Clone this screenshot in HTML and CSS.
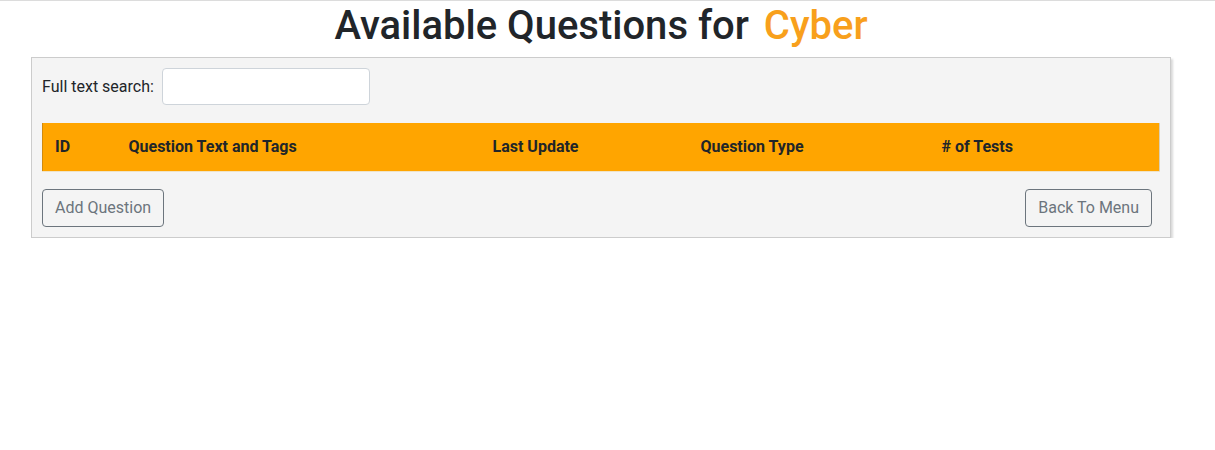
FILE: index.html
```html
<!DOCTYPE html>
<html>
<head>
<meta charset="utf-8">
<link rel="stylesheet" href="styles.css">
</head>
<body>
<div class="topline"></div>
<h1 class="title">Available Questions for <span class="subject">Cyber</span></h1>
<div class="card">
  <div class="search">
    <label>Full text search:</label>
    <input type="text" class="search-input">
  </div>
  <table class="qtable">
    <thead>
      <tr>
        <th class="c-id">ID</th>
        <th class="c-text">Question Text and Tags</th>
        <th class="c-date">Last Update</th>
        <th class="c-type">Question Type</th>
        <th class="c-tests"># of Tests</th>
      </tr>
    </thead>
  </table>
  <div class="actions">
    <button class="btn">Add Question</button>
    <button class="btn">Back To Menu</button>
  </div>
</div>
</body>
</html>
```

FILE: styles.css
```css
html, body {
  margin: 0;
  padding: 0;
  background: #fff;
}
body {
  font-family: Roboto, "Liberation Sans", sans-serif;
  font-size: 16px;
  color: #212529;
}
.topline {
  height: 1px;
  background: #dcdcdc;
}
.title {
  margin: 0;
  padding: 1px 13px 0 0;
  height: 53px;
  text-align: center;
  font-size: 40px;
  font-weight: 500;
  line-height: 48px;
  color: #212529;
}
.subject {
  color: #f8a01c;
  margin-left: 5px;
}
.card {
  margin: 2px 44px 0 31px;
  background: #f4f4f4;
  border: 1px solid #cccccc;
  box-shadow: 2px 2px 2px rgba(0,0,0,0.15);
  padding: 10px;
}
.search {
  display: flex;
  align-items: center;
  gap: 8px;
  height: 37px;
}
.search label {
  font-size: 16px;
  color: #212529;
}
.search-input {
  width: 208px;
  height: 37px;
  box-sizing: border-box;
  border: 1px solid #ced4da;
  border-radius: 4px;
  background: #fff;
  padding: 6px 12px;
  font: inherit;
}
.qtable {
  margin-top: 18px;
  width: 100%;
  border-collapse: collapse;
  table-layout: fixed;
}
.qtable th {
  background: #ffa500;
  text-align: left;
  font-weight: 700;
  font-size: 16px;
  height: 48px;
  box-sizing: border-box;
  padding: 0 12px;
  color: #212529;
  border-bottom: 1px solid #efe3c8;
}
.qtable th.c-id {
  border-left: 1px solid #d08a10;
  width: 74px;
}
.qtable th.c-text { width: 364px; }
.qtable th.c-date { width: 208px; }
.qtable th.c-type { width: 241px; }
.qtable th.c-tests {
  border-right: 1px solid #d9d0b8;
}
.actions {
  margin-top: 17px;
  display: flex;
  justify-content: space-between;
  padding-right: 8px;
}
.btn {
  font-family: Roboto, "Liberation Sans", sans-serif;
  font-size: 16px;
  color: #6c757d;
  background: transparent;
  border: 1px solid #6c757d;
  border-radius: 4px;
  height: 38px;
  padding: 0 12px;
}
```
